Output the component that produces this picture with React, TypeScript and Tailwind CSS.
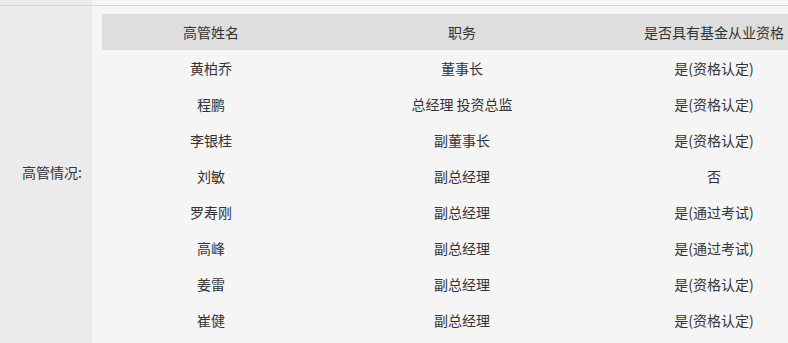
const rows: [string, string, string][] = [
  ['黄柏乔', '董事长', '是(资格认定)'],
  ['程鹏', '总经理 投资总监', '是(资格认定)'],
  ['李银桂', '副董事长', '是(资格认定)'],
  ['刘敏', '副总经理', '否'],
  ['罗寿刚', '副总经理', '是(通过考试)'],
  ['高峰', '副总经理', '是(通过考试)'],
  ['姜雷', '副总经理', '是(资格认定)'],
  ['崔健', '副总经理', '是(资格认定)'],
];

export default function App() {
  return (
    <div
      className="w-[788px] h-[343px] overflow-hidden flex flex-col bg-[#f5f5f5] text-[14px] text-[#333]"
      style={{fontFamily: '"Noto Sans CJK SC", "Noto Sans", sans-serif'}}
    >
      <div className="flex h-[5px] shrink-0">
        <div className="w-[92px] bg-[#ecebeb]" />
        <div className="flex-1 bg-[#f5f5f5]" />
      </div>
      <div className="flex flex-1 border-t border-[#d6d6d6]">
        <div className="w-[92px] shrink-0 bg-[#ecebeb] flex items-center justify-end pr-[10px] pb-[5px]">
          高管情况:
        </div>
        <div className="flex-1 bg-[#f5f5f5] pl-[10px] pt-[8px] overflow-hidden">
          <table className="border-collapse table-fixed w-[722px]">
            <colgroup>
              <col className="w-[218px]" />
              <col className="w-[284px]" />
              <col className="w-[220px]" />
            </colgroup>
            <thead>
              <tr className="bg-[#dedede] h-[36px]">
                <th className="font-normal text-center">高管姓名</th>
                <th className="font-normal text-center">职务</th>
                <th className="font-normal text-center whitespace-nowrap">是否具有基金从业资格</th>
              </tr>
            </thead>
            <tbody>
              {rows.map((r) => (
                <tr key={r[0]} className="h-[36px]">
                  <td className="text-center">{r[0]}</td>
                  <td className="text-center">{r[1]}</td>
                  <td className="text-center">{r[2]}</td>
                </tr>
              ))}
            </tbody>
          </table>
        </div>
      </div>
    </div>
  );
}
